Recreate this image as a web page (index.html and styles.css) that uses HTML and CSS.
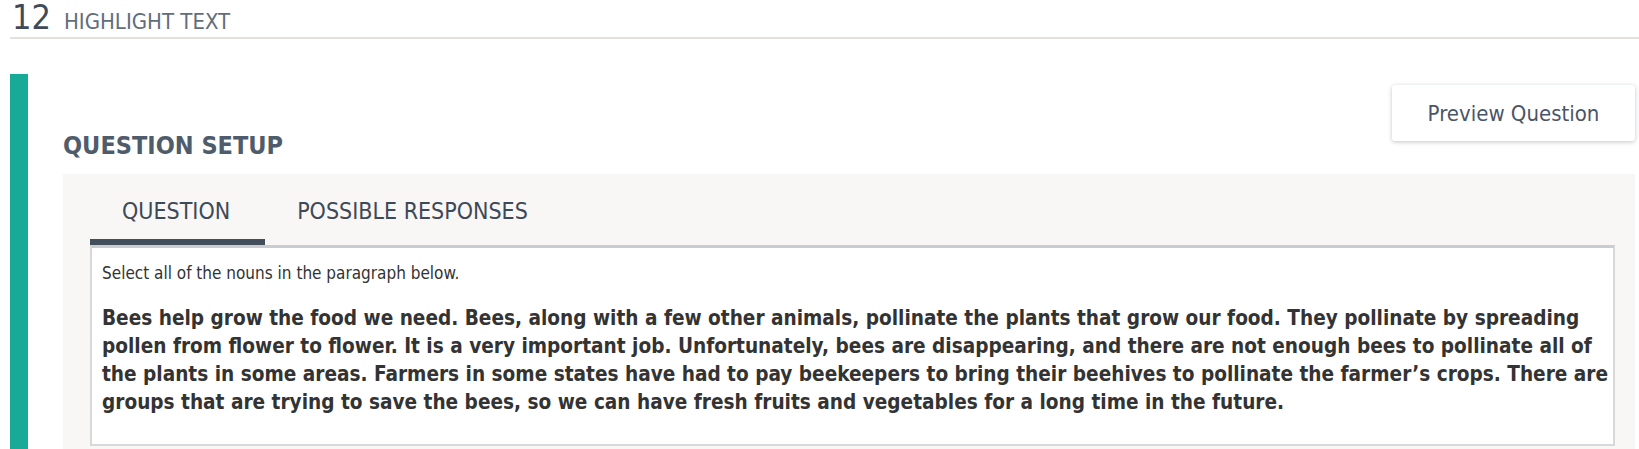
FILE: index.html
```html
<!DOCTYPE html>
<html lang="en">
<head>
<meta charset="utf-8">
<title>Highlight Text</title>
<link rel="stylesheet" href="styles.css">
</head>
<body>
<header class="header">
  <span class="num">12</span>
  <span class="kind">HIGHLIGHT TEXT</span>
</header>
<div class="main">
  <div class="accent"></div>
  <div class="content">
    <div class="toprow">
      <h2 class="title">QUESTION SETUP</h2>
      <button class="preview" type="button">Preview Question</button>
    </div>
    <section class="panel">
      <nav class="tabs">
        <span class="tab active">QUESTION</span>
        <span class="tab">POSSIBLE RESPONSES</span>
      </nav>
      <div class="box">
        <p class="prompt">Select all of the nouns in the paragraph below.</p>
        <p class="passage">Bees help grow the food we need. Bees, along with a few other animals, pollinate the plants that grow our food. They pollinate by spreading pollen from flower to flower. It is a very important job. Unfortunately, bees are disappearing, and there are not enough bees to pollinate all of the plants in some areas. Farmers in some states have had to pay beekeepers to bring their beehives to pollinate the farmer’s crops. There are groups that are trying to save the bees, so we can have fresh fruits and vegetables for a long time in the future.</p>
      </div>
    </section>
  </div>
</div>
</body>
</html>
```

FILE: styles.css
```css
* { box-sizing: border-box; }
html, body { margin: 0; padding: 0; height: 100%; overflow: hidden; }
body {
  display: flex;
  flex-direction: column;
  font-family: "DejaVu Sans Condensed", "DejaVu Sans", sans-serif;
  font-stretch: condensed;
  background: #ffffff;
  color: #333333;
}
.header {
  display: flex;
  align-items: baseline;
  flex: none;
  margin-left: 10px;
  padding-left: 2px;
  height: 39px;
  border-bottom: 2px solid #e4e0db;
}
.num {
  font-size: 34px;
  line-height: 34px;
  color: #3f4a58;
}
.kind {
  margin-left: 13px;
  font-size: 22px;
  color: #616d7b;
}
.main {
  display: flex;
  flex: 1;
  margin-top: 35px;
  min-height: 0;
}
.accent {
  width: 18px;
  margin-left: 10px;
  background: #17aa97;
  flex: none;
}
.content {
  flex: 1;
  display: flex;
  flex-direction: column;
  padding-left: 35px;
  padding-right: 4px;
}
.toprow {
  display: flex;
  justify-content: space-between;
  align-items: flex-start;
  padding-top: 11px;
}
.title {
  margin: 46px 0 0;
  font-size: 25px;
  line-height: 30px;
  font-weight: bold;
  color: #4e5c6b;
}
.preview {
  width: 243px;
  height: 56px;
  border: none;
  border-radius: 3px;
  background: #ffffff;
  box-shadow: 0 1px 4px rgba(40, 50, 70, 0.28);
  font-family: inherit;
  font-stretch: condensed;
  font-size: 22px;
  color: #4a5567;
}
.panel {
  flex: 1;
  margin-top: 13px;
  background: #f8f7f5;
  padding: 0 20px 0 27px;
}
.tabs {
  display: flex;
}
.tab {
  padding: 22px 35px 12px 32px;
  font-size: 23px;
  line-height: 31px;
  color: #3e4957;
  border-bottom: 6px solid transparent;
}
.tab.active {
  border-bottom-color: #434e5b;
}
.box {
  background: #ffffff;
  border: 2px solid #d6d8da;
  border-top: 3px solid #c9cdd1;
  padding: 14px 2px 28px 10px;
}
.prompt {
  margin: 0;
  font-size: 17px;
  line-height: 22px;
  color: #333333;
}
.passage {
  margin: 20px 0 0;
  font-size: 20.6px;
  line-height: 28px;
  font-weight: bold;
  color: #333333;
}
```
